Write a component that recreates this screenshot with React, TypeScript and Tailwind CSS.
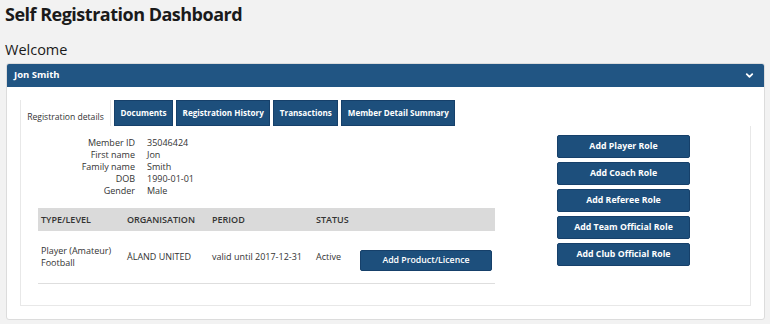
import { ChevronDown } from 'lucide-react'

const details: [string, string][] = [
   ['Member ID', '35046424'],
   ['First name', 'Jon'],
   ['Family name', 'Smith'],
   ['DOB', '1990-01-01'],
   ['Gender', 'Male'],
]

const roles = [
   'Add Player Role',
   'Add Coach Role',
   'Add Referee Role',
   'Add Team Official Role',
   'Add Club Official Role',
]

const tabs = ['Documents', 'Registration History', 'Transactions', 'Member Detail Summary']

export default function App() {
   return (
      <div className="min-h-[324px] bg-[#f2f2f2] pl-[5px] pr-[5px] pt-px text-[#333] font-['Open_Sans',sans-serif]">
         <h1 className="text-[18px] leading-[27px] font-bold text-[#1a1a1a] tracking-[-0.5px]">
            Self Registration Dashboard
         </h1>
         <h2 className="mt-[12px] text-[14.5px] leading-[20px] text-[#1a1a1a]">Welcome</h2>

         <div className="mt-[3px] ml-px rounded-[3px] border border-[#dcdcdc] bg-white">
            <div className="flex h-[23px] items-center justify-between rounded-t-[2px] bg-[#215583] pl-[7px] pr-[9px]">
               <span className="text-[9.5px] font-bold text-white">Jon Smith</span>
               <ChevronDown size={11} strokeWidth={4} className="text-white" />
            </div>

            <div className="px-[13px] pt-[13px] pb-[13px]">
               <div className="flex gap-[3px]">
                  <div className="flex h-[26px] w-[91px] items-end justify-center border-x border-[#e8e8e8] pb-[2px] text-[8.6px]">
                     Registration details
                  </div>
                  {tabs.map((t) => (
                     <div
                        key={t}
                        className="flex h-[26px] items-center border border-[#16406a] bg-[#1d4f7c] px-[5.5px] text-[8.1px] font-bold text-white"
                     >
                        {t}
                     </div>
                  ))}
               </div>

               <div className="flex border-x border-b border-[#e8e8e8] pl-[17px] pt-[9px] pb-[21px]">
                  <div className="w-[457px]">
                     <div className="grid grid-cols-[97px_1fr] gap-x-[12px] pt-[2px] text-[9px] leading-[12px]">
                        {details.map(([k, v]) => (
                           <div key={k} className="contents">
                              <span className="text-right">{k}</span>
                              <span>{v}</span>
                           </div>
                        ))}
                     </div>

                     <table className="mt-[11px] w-[457px] table-fixed border-collapse text-[9px]">
                        <colgroup>
                           <col className="w-[86px]" />
                           <col className="w-[85px]" />
                           <col className="w-[104px]" />
                           <col className="w-[44px]" />
                           <col />
                        </colgroup>
                        <thead>
                           <tr className="h-[23px] bg-[#dadada] text-left">
                              <th className="pl-[3px] font-semibold">TYPE/LEVEL</th>
                              <th className="pl-[3px] font-semibold">ORGANISATION</th>
                              <th className="pl-[3px] font-semibold">PERIOD</th>
                              <th className="pl-[3px] font-semibold">STATUS</th>
                              <th />
                           </tr>
                        </thead>
                        <tbody>
                           <tr className="h-[52px] border-b border-[#dedede]">
                              <td className="pl-[3px] leading-[12px]">
                                 Player (Amateur)
                                 <br />
                                 Football
                              </td>
                              <td className="pl-[3px]">ÅLAND UNITED</td>
                              <td className="pl-[3px]">valid until 2017-12-31</td>
                              <td className="pl-[3px]">Active</td>
                              <td className="pl-[3px] pt-[7px]">
                                 <button className="block h-[21px] w-[132px] rounded-[2px] border border-[#16406a] bg-[#1d4f7c] text-[8.75px] font-semibold text-white">
                                    Add Product/Licence
                                 </button>
                              </td>
                           </tr>
                        </tbody>
                     </table>
                  </div>

                  <div className="ml-[62px] flex w-[133px] flex-col gap-[4px]">
                     {roles.map((r) => (
                        <button
                           key={r}
                           className="h-[23px] rounded-[2px] border border-[#16406a] bg-[#1d4f7c] text-[8.75px] font-bold text-white"
                        >
                           {r}
                        </button>
                     ))}
                  </div>
               </div>
            </div>
         </div>
      </div>
   )
}
